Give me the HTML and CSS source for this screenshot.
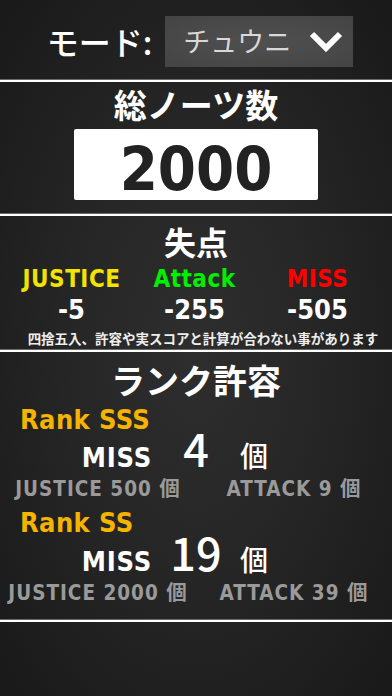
FILE: index.html
```html
<!DOCTYPE html>
<html lang="ja">
<head>
    <meta charset="UTF-8">
    <meta name="viewport" content="width=device-width, initial-scale=1.0">
    <title>チュウニ 許容計算</title>
    <link rel="stylesheet" href="styles.css">
</head>
<body>
    <div class="screen">
        <!-- Mode select -->
        <div class="mode-row">
            <span class="mode-label">モード:</span>
            <div class="mode-select">
                <span class="mode-value">チュウニ</span>
                <svg class="chevron" width="34" height="22" viewBox="0 0 34 22">
                    <polyline points="3,3 17,17 31,3" fill="none" stroke="#fff" stroke-width="6" stroke-linejoin="miter"/>
                </svg>
            </div>
        </div>
        <div class="divider"></div>

        <!-- Total notes -->
        <div class="section notes">
            <div class="title">総ノーツ数</div>
            <div class="notes-box">2000</div>
        </div>
        <div class="divider"></div>

        <!-- Lost points -->
        <div class="section loss">
            <div class="title loss-title">失点</div>
            <div class="loss-grid">
                <div class="judge justice">JUSTICE</div>
                <div class="judge attack">Attack</div>
                <div class="judge miss">MISS</div>
                <div class="loss-value">-5</div>
                <div class="loss-value">-255</div>
                <div class="loss-value">-505</div>
            </div>
            <div class="note">四捨五入、許容や実スコアと計算が合わない事があります</div>
        </div>
        <div class="divider"></div>

        <!-- Rank allowance -->
        <div class="section rank">
            <div class="title rank-title">ランク許容</div>

            <div class="rank-name">Rank SSS</div>
            <div class="miss-row">
                <span class="miss-label">MISS</span>
                <span class="miss-count">4</span>
                <span class="miss-unit">個</span>
            </div>
            <div class="sub-row">
                <span>JUSTICE 500 個</span>
                <span>ATTACK 9 個</span>
            </div>

            <div class="rank-name second">Rank SS</div>
            <div class="miss-row">
                <span class="miss-label">MISS</span>
                <span class="miss-count">19</span>
                <span class="miss-unit">個</span>
            </div>
            <div class="sub-row">
                <span>JUSTICE 2000 個</span>
                <span>ATTACK 39 個</span>
            </div>
        </div>
        <div class="divider"></div>
    </div>
</body>
</html>
```

FILE: styles.css
```css
/* Global styles */
body {
    margin: 0;
    padding: 0;
    font-family: "Noto Sans CJK JP", sans-serif;
    color: #fff;
    background: #1c1c1c;
}
.screen {
    width: 392px;
    height: 696px;
    overflow: hidden;
    background: radial-gradient(ellipse at 50% 50%, #2e2e2e 0%, #262626 45%, #191919 100%);
}
/* Latin labels */
.notes-box,
.judge,
.loss-value,
.rank-name,
.miss-label,
.sub-row {
    font-family: "DejaVu Sans", "Noto Sans CJK JP", sans-serif;
    font-stretch: condensed;
}
/* Dividers */
.divider {
    height: 2px;
    background: #fff;
    border-top: 1px solid #6a6a6a;
}
/* Mode select */
.mode-row {
    height: 76px;
    padding-top: 3px;
    display: flex;
    justify-content: center;
    align-items: center;
    gap: 13px;
}
.mode-label {
    font-size: 32px;
    font-weight: 500;
    line-height: 40px;
    margin-left: 8px;
}
.mode-select {
    width: 188px;
    height: 51px;
    box-sizing: border-box;
    padding: 0 10px 0 18px;
    display: flex;
    align-items: center;
    justify-content: space-between;
    background: radial-gradient(ellipse at 50% 50%, #505050 0%, #444 100%);
}
.mode-value {
    font-size: 27px;
    line-height: 40px;
    color: #d8d8d8;
}
.chevron {
    margin-top: 2px;
}
/* Sections */
.section {
    text-align: center;
}
.title {
    font-size: 33px;
    font-weight: bold;
    line-height: 44px;
}
/* Total notes */
.notes-box {
    width: 244px;
    height: 71px;
    box-sizing: border-box;
    padding-top: 8px;
    margin: 3px auto 0;
    background: #fff;
    border-radius: 2px;
    color: #222;
    font-size: 61px;
    font-weight: bold;
    line-height: 63px;
}
.notes {
    padding-bottom: 13px;
}
/* Lost points */
.loss-title {
    font-size: 32px;
    line-height: 50px;
}
.loss-grid {
    width: 369px;
    margin-left: 10px;
    display: grid;
    grid-template-columns: 1fr 1fr 1fr;
}
.judge {
    font-size: 24px;
    font-weight: bold;
    line-height: 27px;
    letter-spacing: 0.5px;
}
.justice { color: #f2e400; }
.attack { color: #00f000; }
.miss { color: #ff0000; }
.loss-value {
    font-size: 27px;
    font-weight: bold;
    line-height: 34px;
}
.note {
    font-size: 13.5px;
    font-weight: bold;
    line-height: 22px;
    color: #eee;
    padding-left: 14px;
    white-space: nowrap;
}
/* Rank allowance */
.rank {
    text-align: left;
    padding-bottom: 14px;
}
.rank-title {
    font-size: 34px;
    line-height: 55px;
    text-align: center;
}
.rank-name {
    margin: 8px 0 0 20px;
    font-size: 27px;
    font-weight: bold;
    line-height: 10px;
    letter-spacing: 0.4px;
    color: #f5b400;
}
.rank-name.second {
    margin-top: 17px;
}
.miss-row {
    display: grid;
    grid-template-columns: 1fr 88px 1fr;
    align-items: baseline;
}
.rank-name.second + .miss-row {
    margin-top: 1px;
}
.miss-label {
    text-align: right;
    font-size: 27px;
    font-weight: bold;
    line-height: 1;
    letter-spacing: 0.8px;
}
.miss-count {
    text-align: center;
    font-size: 45px;
    font-weight: 500;
    line-height: 1;
}
.miss-unit {
    font-size: 28px;
    font-weight: 500;
    line-height: 1;
}
.sub-row {
    margin-top: 6px;
    display: grid;
    grid-template-columns: 196px 196px;
    font-size: 20.5px;
    font-weight: bold;
    line-height: 24px;
    letter-spacing: 1px;
    color: #9a9a9a;
    text-align: center;
    white-space: nowrap;
}
```
